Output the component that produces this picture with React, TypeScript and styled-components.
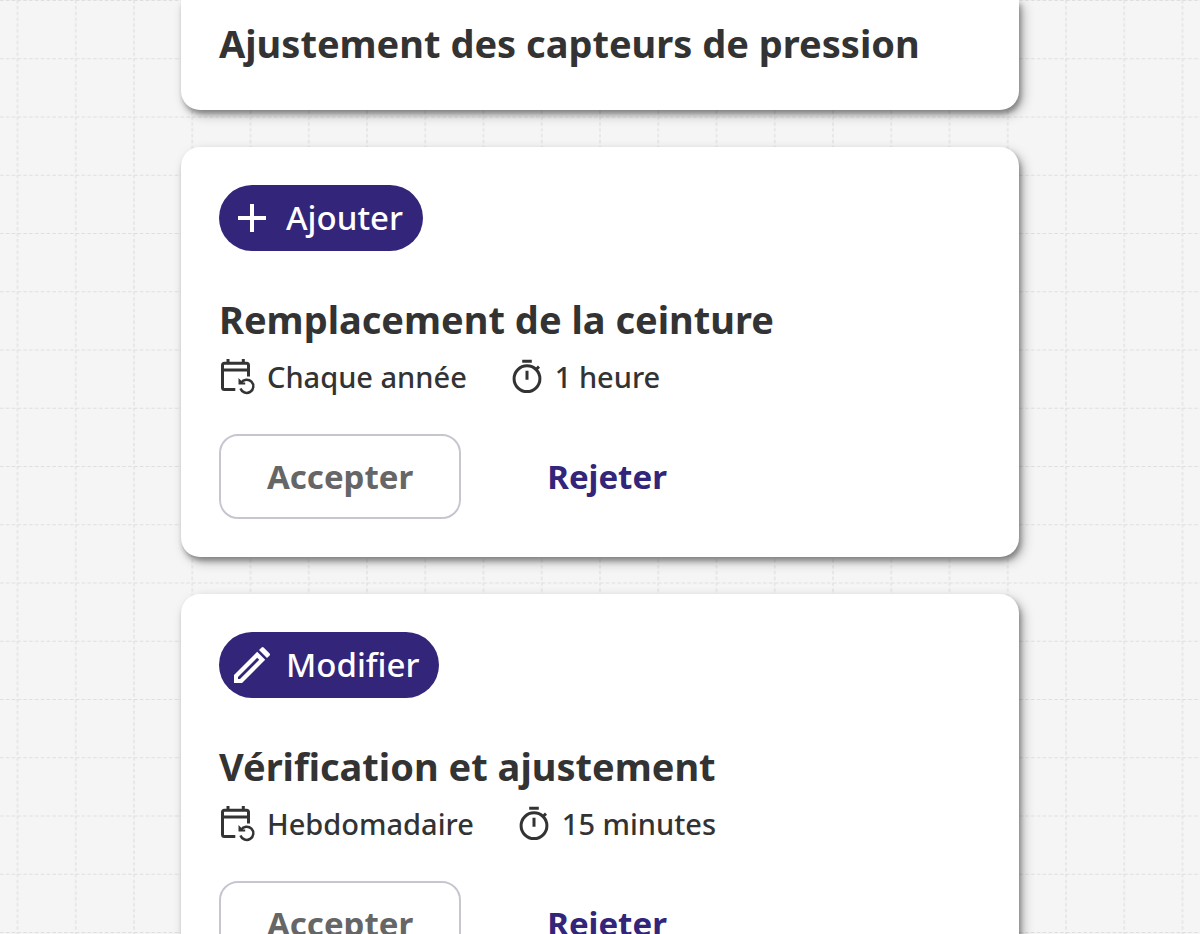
import React from "react";
import styled, { createGlobalStyle } from "styled-components";

const GlobalStyle = createGlobalStyle`
  *, *::before, *::after { box-sizing: border-box; }
  body {
    margin: 0;
    background: #f5f5f5;
    color: #333333;
    font-family: "Noto Sans", "Open Sans", sans-serif;
  }
`;

const Page = styled.main`
  position: relative;
  height: 100vh;
  overflow: hidden;
`;

const GridBackdrop = styled.svg`
  position: absolute;
  inset: 0;
  width: 100%;
  height: 100%;
`;

const Column = styled.div`
  position: relative;
  display: flex;
  flex-direction: column;
  gap: 37px;
  width: 100%;
  max-width: 838px;
  margin: 0 auto;
`;

const Card = styled.article<{ $continued?: boolean }>`
  padding: ${(p) => (p.$continued ? "16px 38px 40px" : "38px")};
  border-radius: ${(p) => (p.$continued ? "0 0 19px 19px" : "19px")};
  background: #ffffff;
  box-shadow: 2px 4px 5px rgba(0, 0, 0, 0.3), 4px 5px 12px rgba(0, 0, 0, 0.28);
`;

const Badge = styled.div`
  display: inline-flex;
  align-items: center;
  gap: 10px;
  height: 66px;
  margin-bottom: 41px;
  padding: 0 20px 0 9px;
  border-radius: 33px;
  background: #32257a;
  color: #ffffff;
  font-size: 33px;
  font-weight: 500;
  line-height: 48px;
  vertical-align: top;
`;

const Title = styled.h2`
  margin: 0;
  font-size: 38px;
  font-weight: 700;
  line-height: 54px;
`;

const MetaRow = styled.div`
  display: flex;
  flex-wrap: wrap;
  gap: 40px;
  margin-top: 11px;
`;

const Meta = styled.span`
  display: inline-flex;
  align-items: center;
  gap: 8px;
  font-size: 29px;
  font-weight: 500;
  line-height: 40px;
`;

const Actions = styled.div`
  display: flex;
  gap: 38px;
  margin-top: 37px;
`;

const ActionButton = styled.button<{ $outlined?: boolean }>`
  height: 85px;
  padding: 0 46px;
  border: 2px solid ${(p) => (p.$outlined ? "#c7c5cf" : "transparent")};
  border-radius: 19px;
  background: transparent;
  color: ${(p) => (p.$outlined ? "#666666" : "#32257a")};
  font: 700 33px/48px "Noto Sans", "Open Sans", sans-serif;
  cursor: pointer;
`;

const CELL = 58.25;

const DashedGrid = () => (
  <GridBackdrop aria-hidden="true">
    <defs>
      <pattern id="cells" x="50%" y="0" width={CELL} height={CELL} patternUnits="userSpaceOnUse">
        <path
          d={`M0 0V${CELL}M${CELL} 0V${CELL}M0 0.4H${CELL}`}
          fill="none"
          stroke="#dedede"
          strokeWidth="1.2"
          strokeDasharray="3.495 2.33"
        />
      </pattern>
    </defs>
    <rect width="100%" height="100%" fill="url(#cells)" />
  </GridBackdrop>
);

const PlusIcon = () => (
  <svg width="48" height="48" viewBox="0 0 24 24" fill="currentColor" aria-hidden="true">
    <path d="M11 13H5v-2h6V5h2v6h6v2h-6v6h-2z" />
  </svg>
);

const PencilIcon = () => (
  <svg width="48" height="48" viewBox="0 0 24 24" fill="currentColor" aria-hidden="true">
    <path
      fillRule="evenodd"
      d="M3 21v-4L14.600 5.400l4 4L7 21zM5 19h1l9.600-9.600-1-1L5 18z"
    />
    <path d="M15.500 4.500l1.300-1.300q.5-.5 1 0l3 3q.5.500 0 1l-1.300 1.300z" />
  </svg>
);

const CalendarIcon = () => (
  <svg width="40" height="40" viewBox="0 0 40 40" fill="none" stroke="currentColor" strokeWidth="3" aria-hidden="true">
    <path d="M16.300 32.500H5.500Q3.500 32.500 3.500 30.500V8.300Q3.500 6.300 5.500 6.300H27.500Q29.500 6.300 29.500 8.300V19.500M3.500 13H29.500M9 2V7M24.300 2V7" />
    <path d="M22.200 25.700A6.600 6.600 0 1 1 21.500 31.500" strokeWidth="2.500" />
    <path d="M19.500 21L22 23.500L23.800 25.400H26.200V27.600H19.500Z" fill="currentColor" stroke="none" />
  </svg>
);

const TimerIcon = () => (
  <svg width="40" height="40" viewBox="0 0 40 40" fill="none" stroke="currentColor" strokeWidth="3" aria-hidden="true">
    <circle cx="20" cy="21.700" r="12.900" />
    <path d="M15.200 4.200H24.800M20 13.700V22.700M28.500 13L32 9.700" />
  </svg>
);

const kinds = {
  add: { label: "Ajouter", Icon: PlusIcon },
  edit: { label: "Modifier", Icon: PencilIcon },
};

interface Suggestion {
  kind: keyof typeof kinds;
  title: string;
  frequency: string;
  duration: string;
}

const suggestions: Suggestion[] = [
  { kind: "add", title: "Remplacement de la ceinture", frequency: "Chaque année", duration: "1 heure" },
  { kind: "edit", title: "Vérification et ajustement", frequency: "Hebdomadaire", duration: "15 minutes" },
];

const SuggestionCard = ({ kind, title, frequency, duration }: Suggestion) => {
  const { label, Icon } = kinds[kind];
  return (
    <Card>
      <Badge>
        <Icon />
        {label}
      </Badge>
      <Title>{title}</Title>
      <MetaRow>
        <Meta>
          <CalendarIcon />
          {frequency}
        </Meta>
        <Meta>
          <TimerIcon />
          {duration}
        </Meta>
      </MetaRow>
      <Actions>
        <ActionButton type="button" $outlined>
          Accepter
        </ActionButton>
        <ActionButton type="button">Rejeter</ActionButton>
      </Actions>
    </Card>
  );
};

export default function App() {
  return (
    <>
      <GlobalStyle />
      <Page>
        <DashedGrid />
        <Column>
          <Card $continued>
            <Title>Ajustement des capteurs de pression</Title>
          </Card>
          {suggestions.map((s) => (
            <SuggestionCard key={s.title} {...s} />
          ))}
        </Column>
      </Page>
    </>
  );
}
